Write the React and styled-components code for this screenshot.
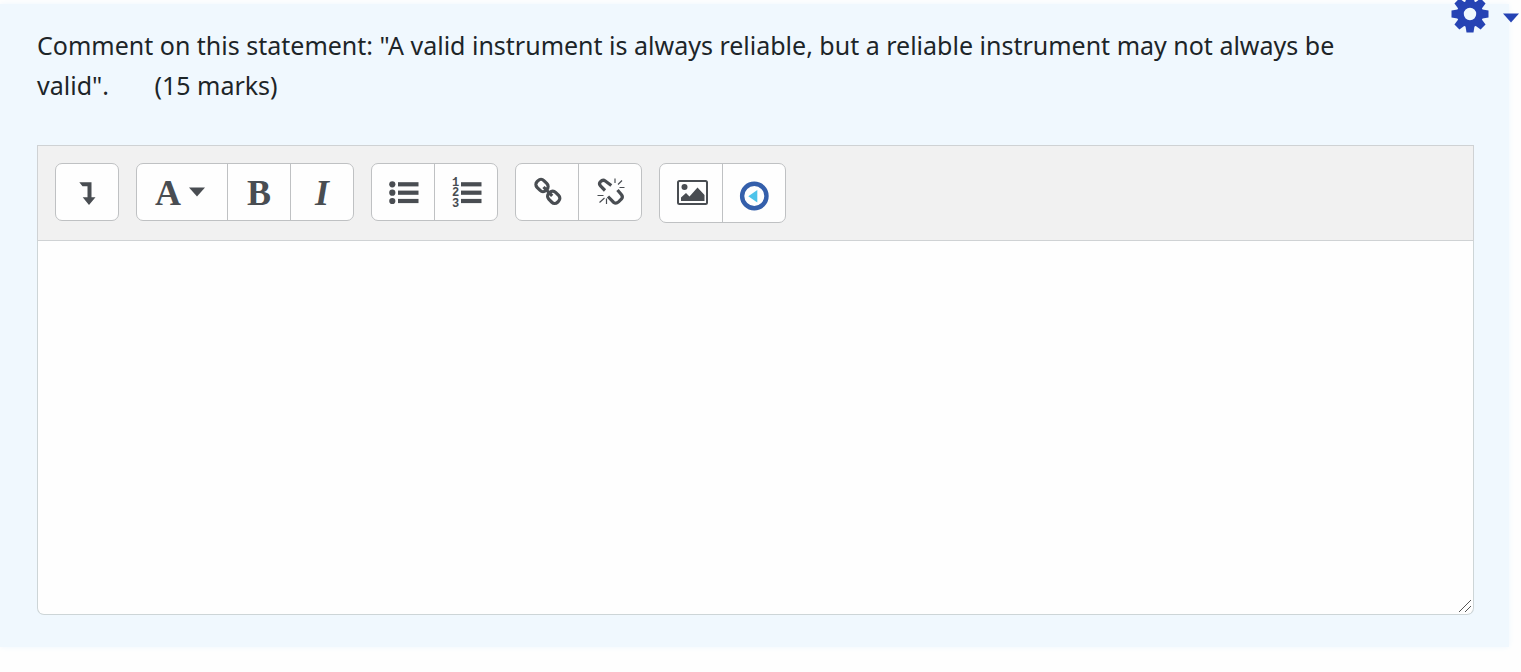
import React, {useState} from 'react';
import styled, {createGlobalStyle} from "styled-components";

const GlobalStyle = createGlobalStyle`
  * {
    box-sizing: border-box;
  }

  body {
    margin: 0;
    background: #fefefe;
    font-family: "Noto Sans", "Open Sans", sans-serif;
    color: #1d2528;
  }
`

const Page = styled.div`
  position: relative;
  padding: 4px 12px 24px 0;
`

const Panel = styled.main`
  padding: 21px 35px 32px 37px;
  background: #f0f8fe;
  box-shadow: 0 0 6px #f0f8fe;
`

const Question = styled.p`
  margin: 0 0 40px;
  padding-right: 80px;
  font-size: 25px;
  line-height: 40px;
`

const SettingsButton = styled.button`
  position: absolute;
  top: -5px;
  right: 2px;
  display: flex;
  align-items: center;
  gap: 14px;
  padding: 0;
  border: 0;
  background: none;
  color: #2643b4;
  cursor: pointer;

  svg:last-child {
    margin-top: 8px;
  }
`

const Toolbar = styled.div`
  display: flex;
  flex-wrap: wrap;
  align-items: flex-start;
  gap: 17px;
  padding: 17px;
  border: 1px solid #cfd2d4;
  background: #f1f1f1;
`

const Group = styled.div`
  display: flex;
  height: ${({$tall}) => $tall ? 60 : 58}px;
  border: 1px solid #bfc1c3;
  border-radius: 7px;
  background: #fefefe;
  overflow: hidden;
`

const ToolButton = styled.button`
  box-sizing: content-box;
  display: flex;
  align-items: center;
  justify-content: center;
  gap: 8px;
  width: ${({$wide}) => $wide ? 86 : 62}px;
  padding: 0 ${({$wide}) => $wide ? 4 : 0}px 0 0;
  border: 0;
  background: none;
  color: #494d52;
  cursor: pointer;

  & + & {
    border-left: 1px solid #bfc1c3;
  }

  svg {
    flex: none;
    overflow: visible;
  }
`

const Letter = styled.span`
  padding-top: 2px;
  font-family: "Liberation Serif", serif;
  font-size: 36px;
  font-weight: bold;
  font-style: ${({$italic}) => $italic ? 'italic' : 'normal'};
  line-height: 40px;
`

const EditorBody = styled.div`
  position: relative;
  display: flex;
`

const Answer = styled.textarea`
  flex: 1;
  min-width: 0;
  height: 374px;
  padding: 12px 16px;
  border: 1px solid #cdd5d7;
  border-top: 0;
  border-radius: 0 0 7px 7px;
  background: #fefefe;
  color: inherit;
  font: inherit;
  font-size: 25px;
  line-height: 40px;
  outline: none;
  resize: vertical;

  &::-webkit-resizer {
    background: transparent;
  }
`

const Grip = styled.svg`
  position: absolute;
  right: 2px;
  bottom: 2px;
  pointer-events: none;
`

const Icon = ({children}) => (
    <svg width="32" height="32" viewBox="0 0 32 32" fill="currentColor" aria-hidden="true">{children}</svg>
)

const Caret = () => (
    <svg width="16" height="10" viewBox="0 0 16 10" fill="currentColor" aria-hidden="true">
        <path d="M0 0.5h16L8 9.5z"/>
    </svg>
)

const ExpandIcon = () => (
    <Icon><path d="M8.3 6.3h12.2v15h4L18 29l-6.3-7.7h4.8v-11h-5z"/></Icon>
)

const BulletIcon = () => (
    <Icon>
        {[8.3, 16.7, 25].map(y => (
            <g key={y}>
                <circle cx="5.3" cy={y} r="3.1"/>
                <rect x="11" y={y - 2.1} width="20.5" height="4.2"/>
            </g>
        ))}
    </Icon>
)

const NumberIcon = () => (
    <Icon>
        {[8.3, 16.7, 25].map((y, index) => (
            <g key={y}>
                <text x="2" y={[10, 20, 31][index]} fontFamily="Liberation Mono, monospace" fontSize="12" fontWeight="bold">{index + 1}</text>
                <rect x="11" y={y - 2.1} width="20.5" height="4.2"/>
            </g>
        ))}
    </Icon>
)

const LinkIcon = () => (
    <Icon>
        <g fill="none" stroke="currentColor" strokeWidth="3.2">
            <rect x="-6.2" y="-4.8" width="12.4" height="9.6" rx="4" transform="translate(11 9.5) rotate(45)"/>
            <rect x="-6.2" y="-4.8" width="12.4" height="9.6" rx="4" transform="translate(22.7 21.3) rotate(45)"/>
            <path d="M12.5 11l8.7 8.8"/>
        </g>
    </Icon>
)

const UnlinkIcon = () => (
    <Icon>
        <g fill="none" stroke="currentColor" strokeWidth="3.2">
            <path d="M11 14.500l-4.500-4.500q-2-2.300 0-4.300q2.300-2.500 4.800-0.700l6 4.500"/>
            <path d="M14 20.500l5.500 5.700q2.500 2 5-0.300l3-3q1.700-2 0-4.200l-4-4.700"/>
        </g>
        <path d="M21 2.500v4.500M28 4.500l-4 4M25.500 11.500h5M3.500 19.500h6M5.500 26.500l5-4.500M12.500 22.500v5.500" fill="none" stroke="currentColor" strokeWidth="1.2"/>
    </Icon>
)

const PictureIcon = () => (
    <Icon>
        <rect x="3" y="4" width="29" height="23" rx="1.5" fill="none" stroke="currentColor" strokeWidth="2"/>
        <circle cx="9.5" cy="10" r="3"/>
        <path d="M6 24v-3.500l5-4.500 3.500 3.500 8-9 7 7.500v6z"/>
    </Icon>
)

const RecordIcon = () => (
    <Icon>
        <circle cx="16.3" cy="19" r="12.2" fill="#fefefe" stroke="#345fab" strokeWidth="4.4"/>
        <path d="M19.300 13v12.600l-9-6.300z" fill="#4dc3ea"/>
    </Icon>
)

const GearIcon = () => (
    <svg width="38" height="38" viewBox="-19 -19 38 38" fill="currentColor" aria-hidden="true">
        {[0, 45, 90, 135, 180, 225, 270, 315].map(angle => (
            <path key={angle} d="M-4.700-11l1.200-7.500h7l1.200 7.500z" transform={`rotate(${angle})`}/>
        ))}
        <circle r="9.7" fill="none" stroke="currentColor" strokeWidth="7"/>
    </svg>
)

function App() {
    const [answer, setAnswer] = useState('')

    return (
        <>
            <GlobalStyle/>
            <Page>
                <Panel>
                    <Question id="question">
                        Comment on this statement: "A valid instrument is always reliable, but a reliable instrument may not always be valid".&nbsp;&nbsp;&nbsp;&nbsp;&nbsp;&nbsp; (15 marks)
                    </Question>
                    <Toolbar role="toolbar" aria-label="Formatting">
                        <Group>
                            <ToolButton aria-label="Show more buttons"><ExpandIcon/></ToolButton>
                        </Group>
                        <Group>
                            <ToolButton $wide aria-label="Paragraph styles"><Letter>A</Letter><Caret/></ToolButton>
                            <ToolButton aria-label="Bold"><Letter>B</Letter></ToolButton>
                            <ToolButton aria-label="Italic"><Letter $italic>I</Letter></ToolButton>
                        </Group>
                        <Group>
                            <ToolButton aria-label="Unordered list"><BulletIcon/></ToolButton>
                            <ToolButton aria-label="Ordered list"><NumberIcon/></ToolButton>
                        </Group>
                        <Group>
                            <ToolButton aria-label="Link"><LinkIcon/></ToolButton>
                            <ToolButton aria-label="Unlink"><UnlinkIcon/></ToolButton>
                        </Group>
                        <Group $tall>
                            <ToolButton aria-label="Insert image"><PictureIcon/></ToolButton>
                            <ToolButton aria-label="Insert recording"><RecordIcon/></ToolButton>
                        </Group>
                    </Toolbar>
                    <EditorBody>
                        <Answer
                            aria-labelledby="question"
                            value={answer}
                            onChange={event => setAnswer(event.target.value)}
                        />
                        <Grip width="14" height="14" viewBox="0 0 14 14" aria-hidden="true">
                            <path d="M1 13L13 1M7 13l6-6" fill="none" stroke="#555" strokeWidth="1"/>
                        </Grip>
                    </EditorBody>
                </Panel>
                <SettingsButton aria-label="Settings">
                    <GearIcon/>
                    <Caret/>
                </SettingsButton>
            </Page>
        </>
    )
}

export default App;
